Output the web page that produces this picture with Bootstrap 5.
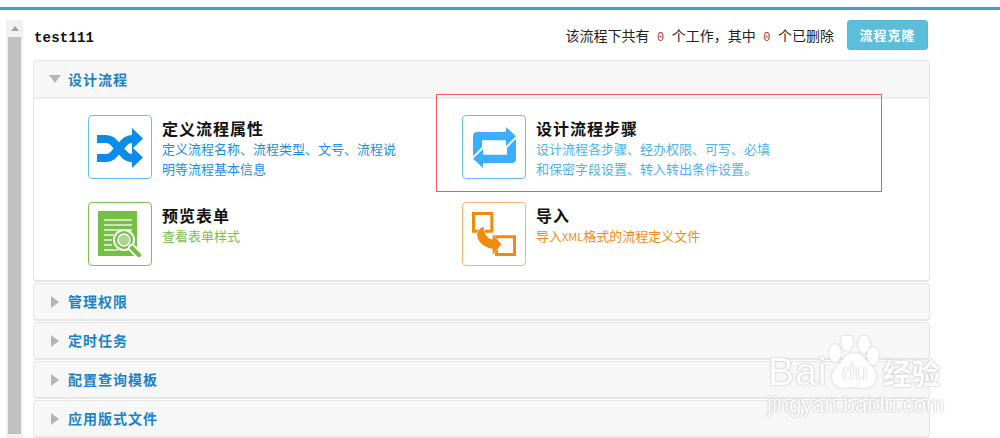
<!DOCTYPE html>
<html lang="zh">
<head>
<meta charset="utf-8">
<title>test111</title>
<link href="https://cdn.jsdelivr.net/npm/bootstrap@5.3.0/dist/css/bootstrap.min.css" rel="stylesheet">
<style>
html,body{height:438px;overflow:hidden}
body{background:#fff;font-family:"Liberation Sans","Noto Sans CJK SC",sans-serif;position:relative}
.topline{margin-top:7px;height:3px;background:#4a9cc8}
.shell{padding:10px 70px 0 6px;gap:10px}
.fakebar{width:17px;height:418px;background:#f1f1f1;padding:17px 2px 0;flex:none}
.fakebar-up{position:absolute;left:11px;top:26px;width:0;height:0;border:4px solid transparent;border-top:0;border-bottom:5px solid #a3a3a3}
.fakebar-thumb{background:#c1c1c1;height:397px}
.mainarea{width:897px;position:relative}
.headrow{height:40px;padding:0 2px 0 1px}
.wf-name{font:bold 14px/30px "Liberation Mono",monospace;color:#111;margin-top:3px;letter-spacing:.2px}
.wf-stat{font-size:14px;color:#222;font-family:"Noto Sans CJK SC",sans-serif;margin-right:13px}
.wf-stat i{font:12px "Liberation Mono",monospace;color:#b03a3a;margin:0 7.5px}
.clone-btn{width:81px;height:30px;padding:0;font-size:13px;font-weight:700;letter-spacing:1px;border-radius:3px;background:#5bbfdc;border:1px solid #5ab8d6;color:#fff;font-family:"Noto Sans CJK SC",sans-serif}
.fold{border:1px solid #e6e6e6;border-width:1px 1px 2px;border-radius:4px;background:#f7f7f7;margin-bottom:1px}
.fold-head{height:35px;padding-left:15px;gap:7px;color:#1a82c9;font-size:14px;font-weight:700;letter-spacing:1px;font-family:"Noto Sans CJK SC",sans-serif}
.fold-head-open{height:36px}
.fold-body{height:183px;background:#fff;border-top:2px solid #ececec;padding:16px 0 0 54px;display:grid;grid-template-columns:374px 374px;grid-auto-rows:87px;border-radius:0 0 4px 4px}
.tri-d{width:0;height:0;border:6.5px solid transparent;border-top:8px solid #b5b5b5;border-bottom:0}
.tri-r{width:0;height:0;border:6.5px solid transparent;border-left:8px solid #b5b5b5;border-right:0;margin-left:2px;margin-right:2px}
.tile{width:64px;height:64px;border:1px solid;border-radius:4px;flex:none;background:#fff;display:flex;align-items:center;justify-content:center;margin-right:2px}
.tile svg{display:block}
.bd-blue{border-color:#62c4e4}.bd-green{border-color:#7dc04d}.bd-orange{border-color:#f5b56e}
.item-title{font-size:16px;font-weight:700;color:#111;letter-spacing:1px;line-height:20px;margin-top:3px;font-family:"Noto Sans CJK SC",sans-serif}
.item-sub{font-size:13px;line-height:20px;margin-top:1px;font-family:"Noto Sans CJK SC",sans-serif}
.item-sub span{font-size:11px}
.c-deep{color:#1a8fe0}.c-sky{color:#4cb2f0}.c-green{color:#7cc04e}.c-orange{color:#f48a0c}
.callout{position:absolute;left:403px;top:74px;width:446px;height:98px;border:1px solid #ee5b5b;pointer-events:none}
.wm{position:absolute;left:768px;top:336px;width:190px;height:84px;color:#fff;pointer-events:none;font-family:"Liberation Sans",sans-serif;text-shadow:0 0 2px #bdbdbd,0 0 1px #bdbdbd}
.wm svg{position:absolute;left:0;top:0;filter:drop-shadow(0 0 1px #c4c4c4)}
.wm-main{position:relative;display:flex;align-items:center;height:40px;margin-top:16px;font-size:39px;line-height:40px;letter-spacing:1px}
.wm-du{width:45px;margin-left:5px;text-align:center;font-size:23px;letter-spacing:0;text-shadow:0 0 1px #999}
.wm-cn{margin-left:5px;font-size:29px;font-weight:700;letter-spacing:0;font-family:"Noto Sans CJK SC",sans-serif}
.wm-dom{position:relative;font-size:22px;line-height:24px;margin-top:1px;margin-left:-1px}
</style>
</head>
<body>
<div class="topline"></div>
<div class="shell d-flex">
  <div class="fakebar"><div class="fakebar-thumb"></div></div>
  <div class="fakebar-up"></div>
  <div class="mainarea">
    <div class="headrow d-flex align-items-start justify-content-between">
      <div class="wf-name">test111</div>
      <div class="d-flex align-items-center">
        <span class="wf-stat">该流程下共有<i>0</i>个工作，其中<i>0</i>个已删除</span>
        <button type="button" class="btn clone-btn">流程克隆</button>
      </div>
    </div>
    <div class="fold">
      <div class="fold-head fold-head-open d-flex align-items-center"><span class="tri-d"></span><span>设计流程</span></div>
      <div class="fold-body">
        <div class="d-flex gap-2">
          <div class="tile bd-blue">
            <svg width="46" height="41" viewBox="0 0 46 41"><path fill="none" stroke="#0d8bea" stroke-width="8" d="M0 12h9c6 0 8 4 13 9.500s7 9.500 13 9.500h2M0 31h9c6 0 8-4 13-9.500s7-9.500 13-9.500h2"/><path fill="#0d8bea" d="M35 1l11 10.500-11 10.500zM35 20l11 10.500L35 41z"/></svg>
          </div>
          <div>
            <div class="item-title">定义流程属性</div>
            <div class="item-sub c-deep">定义流程名称、流程类型、文号、流程说<br>明等流程基本信息</div>
          </div>
        </div>
        <div class="d-flex gap-2">
          <div class="tile bd-blue">
            <svg width="43" height="41" viewBox="0 0 129 123"><path fill="#3aaeff" d="M0 88V28Q0 15 13 15H99V0L129 28 99 57V40H27V60Z"/><path fill="#3aaeff" transform="rotate(180 64.500 61.500)" d="M0 88V28Q0 15 13 15H99V0L129 28 99 57V40H27V60Z"/></svg>
          </div>
          <div>
            <div class="item-title">设计流程步骤</div>
            <div class="item-sub c-sky">设计流程各步骤、经办权限、可写、必填<br>和保密字段设置、转入转出条件设置。</div>
          </div>
        </div>
        <div class="d-flex gap-2">
          <div class="tile bd-green">
            <svg width="48" height="50" viewBox="2 0 48 50"><path fill="#76bf47" d="M4 2h39v45H4z"/><path stroke="#e9f5df" stroke-width="1.500" d="M10 11h28M10 16h28M10 21h28M10 26h10M10 31h8M10 36h8M10 41h14"/><circle cx="30" cy="31" r="10" fill="#76bf47" stroke="#fff" stroke-width="2"/><circle cx="30" cy="31" r="6" fill="#a8d68a" stroke="#fff" stroke-width="1.500"/><path stroke="#fff" stroke-width="8" stroke-linecap="round" d="M38 39l7 7"/><path stroke="#76bf47" stroke-width="4.500" stroke-linecap="round" d="M38 39l7 7"/></svg>
          </div>
          <div>
            <div class="item-title">预览表单</div>
            <div class="item-sub c-green">查看表单样式</div>
          </div>
        </div>
        <div class="d-flex gap-2">
          <div class="tile bd-orange">
            <svg width="44" height="44" viewBox="0 0 132 132"><path fill="none" stroke="#f48a0c" stroke-width="9" d="M4.500 4.500h55v53h-55zM73.500 74.500h54v53h-54z"/><path fill="#f48a0c" stroke="#fff" stroke-width="3" paint-order="stroke" d="M34 44C20 50 14 62 16 72 18 92 40 108 62 110V128L88 97 62 66V82C50 82 38 72 34 44Z"/></svg>
          </div>
          <div>
            <div class="item-title">导入</div>
            <div class="item-sub c-orange">导入<span>XML</span>格式的流程定义文件</div>
          </div>
        </div>
      </div>
    </div>
    <div class="fold"><div class="fold-head d-flex align-items-center"><span class="tri-r"></span><span>管理权限</span></div></div>
    <div class="fold"><div class="fold-head d-flex align-items-center"><span class="tri-r"></span><span>定时任务</span></div></div>
    <div class="fold"><div class="fold-head d-flex align-items-center"><span class="tri-r"></span><span>配置查询模板</span></div></div>
    <div class="fold"><div class="fold-head d-flex align-items-center"><span class="tri-r"></span><span>应用版式文件</span></div></div>
    <div class="callout"></div>
  </div>
</div>
<div class="wm">
  <svg width="190" height="60" viewBox="0 0 190 60"><g fill="#fff"><ellipse cx="67" cy="17" rx="6" ry="9"/><ellipse cx="79" cy="6" rx="6" ry="9"/><ellipse cx="96" cy="8" rx="6" ry="9"/><ellipse cx="105" cy="20" rx="6" ry="9"/><path d="M86 17c8 0 11 6 15 10s7 8 7 14c0 8-7 11-13 11-4 0-6-1-9-1s-6 1-10 1c-7 0-12-4-12-11 0-6 4-10 8-14s6-10 14-10z"/></g></svg>
  <div class="wm-main"><span>Bai</span><span class="wm-du">du</span><span class="wm-cn">经验</span></div>
  <div class="wm-dom">jingyan.baidu.com</div>
</div>
</body>
</html>
